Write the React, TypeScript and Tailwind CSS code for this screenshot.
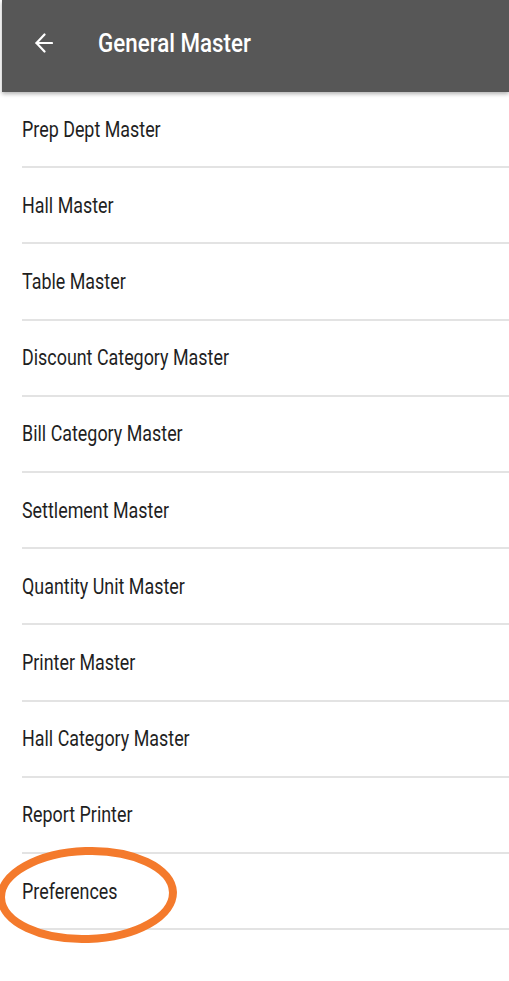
import React from 'react';

const items = [
  'Prep Dept Master',
  'Hall Master',
  'Table Master',
  'Discount Category Master',
  'Bill Category Master',
  'Settlement Master',
  'Quantity Unit Master',
  'Printer Master',
  'Hall Category Master',
  'Report Printer',
  'Preferences',
];

export default function App() {
  return (
    <div className="relative w-[509px] h-[981px] bg-white overflow-hidden" style={{ fontFamily: 'Roboto, "Liberation Sans", sans-serif' }}>
      <header className="h-[92px] ml-[2px] pb-[6px] bg-[#575757] flex items-center shadow-[0_2px_4px_rgba(0,0,0,0.3)] relative z-10">
        <svg className="ml-[33px] w-[18px] h-[22px]" viewBox="0 0 18 22" fill="none" stroke="white" strokeWidth="2.2" strokeLinecap="round" strokeLinejoin="round">
          <path d="M17 11H1.5" />
          <path d="M9.5 2.5L1.5 11l8 8.5" />
        </svg>
        <h1 className="ml-[45px] text-white text-[26px] leading-none font-medium scale-x-[0.86] origin-left whitespace-nowrap">General Master</h1>
      </header>

      <ul className="pl-[22px]">
        {items.map((item) => (
          <li key={item} className="h-[76.2px] flex flex-col">
            <div className="flex-1 flex items-center pt-[1px]">
              <span className="text-[22.5px] text-[#1f1f1f] scale-x-[0.795] origin-left whitespace-nowrap">{item}</span>
            </div>
            <div className="h-[2px] bg-[#e3e3e3]" />
          </li>
        ))}
      </ul>

      <svg className="absolute left-[-6px] top-[845px] w-[186px] h-[102px]" viewBox="0 0 186 102" fill="none">
        <ellipse cx="93" cy="50" rx="86" ry="44" stroke="#f47a2c" strokeWidth="8" transform="rotate(-2 93 50)" />
      </svg>
    </div>
  );
}
